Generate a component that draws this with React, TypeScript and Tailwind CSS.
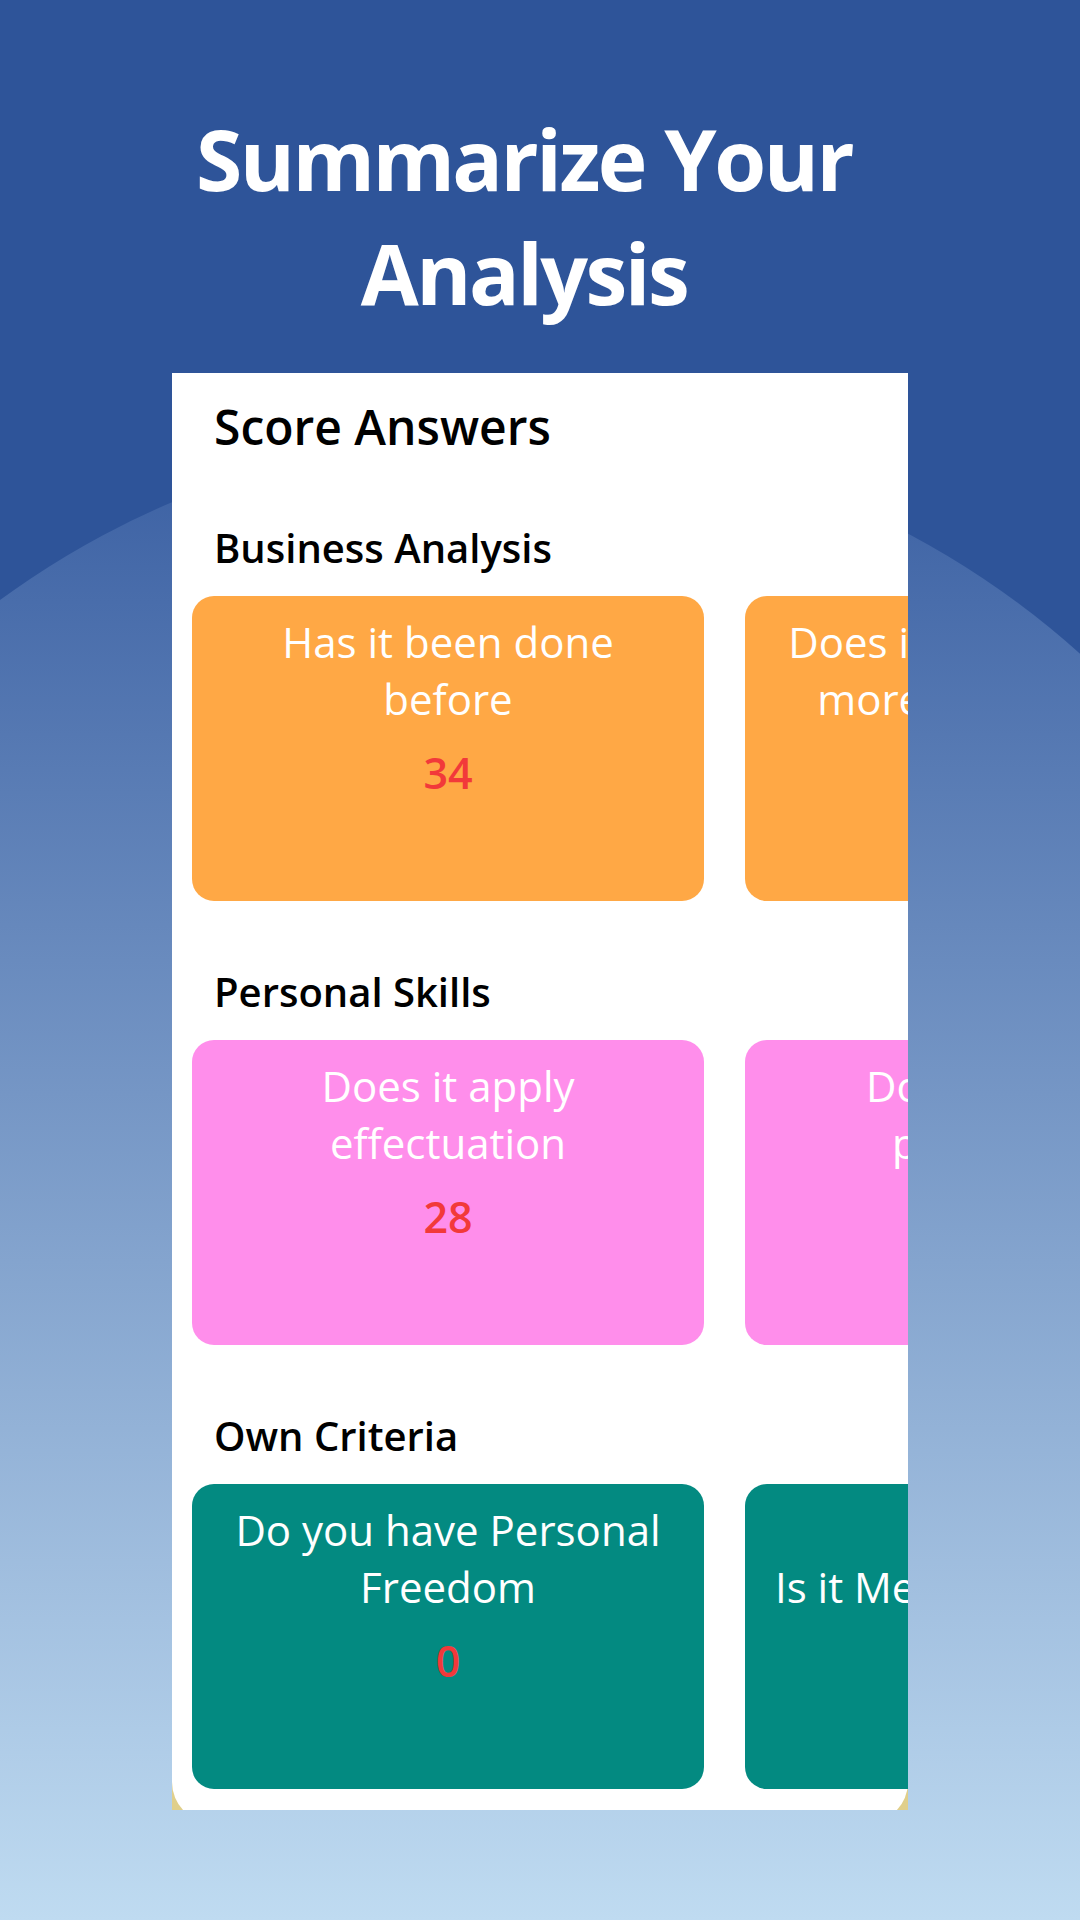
import React from "react";

type Card = { lines: string[]; score?: string };
type Section = { title: string; color: string; cards: Card[] };

const sections: Section[] = [
  {
    title: "Business Analysis",
    color: "bg-[#ffa845]",
    cards: [
      { lines: ["Has it been done", "before"], score: "34" },
      { lines: ["Does it have a market", "more than the rest"], score: "21" },
    ],
  },
  {
    title: "Personal Skills",
    color: "bg-[#ff8eeb]",
    cards: [
      { lines: ["Does it apply", "effectuation"], score: "28" },
      { lines: ["Does it match", "personality"], score: "15" },
    ],
  },
  {
    title: "Own Criteria",
    color: "bg-[#038a81]",
    cards: [
      { lines: ["Do you have Personal", "Freedom"], score: "0" },
      { lines: ["\u00a0", "Is it Meaningful for You"] },
    ],
  },
];

function ScoreCard({ card, color }: { card: Card; color: string }) {
  return (
    <div
      className={`${color} w-[512px] h-[305px] shrink-0 rounded-[22px] pt-[17px] flex flex-col items-center text-white`}
    >
      <div className="text-[42px] leading-[57px] font-medium text-center">
        {card.lines.map((l, i) => (
          <div key={i} className="whitespace-nowrap">
            {l}
          </div>
        ))}
      </div>
      {card.score !== undefined && (
        <div className="mt-[16px] text-[43px] leading-[60px] font-semibold text-[#f2393a]">
          {card.score}
        </div>
      )}
    </div>
  );
}

export default function App() {
  return (
    <div className="relative w-[1080px] h-[1920px] overflow-hidden bg-[#2e5499] font-['Open_Sans',sans-serif]">
      <div className="absolute left-[-350px] top-[434px] w-[1714px] h-[1714px] rounded-full bg-[linear-gradient(to_bottom,#3a5fa2_0px,#bfdbf1_1486px)]" />
      <div className="relative flex flex-col">
        <h1 className="pt-[102px] pr-[32px] text-center text-white font-bold text-[84px] leading-[114px] tracking-[-2.5px]">
          <div>Summarize Your</div>
          <div>Analysis</div>
        </h1>
        <div className="mt-[43px] ml-[172px] w-[736px] h-[1437px] overflow-hidden bg-[#e0cf8b]">
          <div className="h-[1450px] bg-white rounded-b-[41px] pt-[25px] flex flex-col">
            <div className="pl-[42px] text-[48px] leading-[58px] font-semibold text-black">
              Score Answers
            </div>
            {sections.map((s, si) => (
              <div key={s.title} className={si === 0 ? "mt-[68px]" : "mt-[67px]"}>
                <div className="pl-[42px] text-[40px] leading-[48px] font-semibold text-black">
                  {s.title}
                </div>
                <div className="mt-[24px] pl-[20px] flex gap-[41px]">
                  {s.cards.map((c, ci) => (
                    <ScoreCard key={ci} card={c} color={s.color} />
                  ))}
                </div>
              </div>
            ))}
          </div>
        </div>
      </div>
    </div>
  );
}
